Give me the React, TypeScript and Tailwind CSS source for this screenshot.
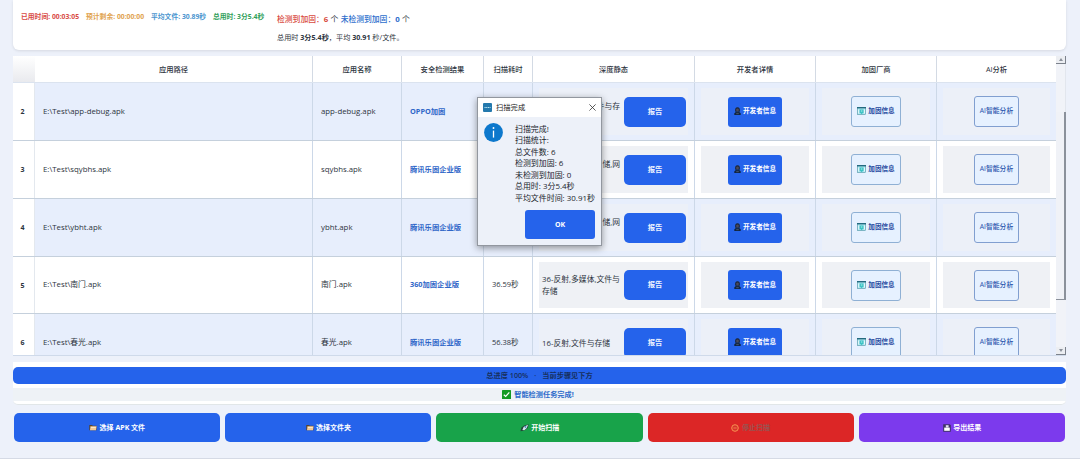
import type { ReactNode } from 'react'

interface ScanRow {
    id: number
    path: string
    name: string
    result: string
    time?: string
    detail: string[]
    height: string
}

const rows: ScanRow[] = [
    { id: 2, path: 'E:\\Test\\app-debug.apk', name: 'app-debug.apk', result: 'OPPO加固', detail: ['件与存', '\u00a0'], height: 'h-[58px]' },
    { id: 3, path: 'E:\\Test\\sqybhs.apk', name: 'sqybhs.apk', result: '腾讯乐固企业版', detail: ['储,网', '\u00a0'], height: 'h-[58px]' },
    { id: 4, path: 'E:\\Test\\ybht.apk', name: 'ybht.apk', result: '腾讯乐固企业版', detail: ['储,网', '\u00a0'], height: 'h-[58px]' },
    { id: 5, path: 'E:\\Test\\南门.apk', name: '南门.apk', result: '360加固企业版', time: '36.59秒', detail: ['36-反射,多媒体,文件与', '存储'], height: 'h-[57px]' },
    { id: 6, path: 'E:\\Test\\春光.apk', name: '春光.apk', result: '腾讯乐固企业版', time: '56.38秒', detail: ['16-反射,文件与存储'], height: 'h-[58px]' },
]

const columns = ['应用路径', '应用名称', '安全检测结果', '扫描耗时', '深度静态', '开发者详情', '加固厂商', 'AI分析']

const GRID = 'grid grid-cols-[22px_278px_89px_82px_49px_162px_121px_121px_120px]'

const summary = [
    '扫描完成!',
    '扫描统计:',
    '总文件数: 6',
    '检测到加固: 6',
    '未检测到加固: 0',
    '总用时: 3分5.4秒',
    '平均文件时间: 30.91秒',
]

function PersonIcon() {
    return (
        <svg width="7" height="8" viewBox="0 0 7 8" className="shrink-0 mb-px">
            <path d="M0.3 8V6.2L1.8 5h3.4l1.5 1.2V8z" fill="#10243f" />
            <path d="M1.2 4.8C0.8 1.6 1.6 0.3 3.5 0.3s2.7 1.3 2.3 4.5z" fill="#1b2436" />
            <circle cx="3.5" cy="3" r="1.4" fill="#4a4a5c" />
            <path d="M2.2 5.8h2.6v1.4H2.2z" fill="#3d4c68" />
        </svg>
    )
}

function VendorIcon() {
    return (
        <svg width="9" height="8" viewBox="0 0 9 8" className="shrink-0 mb-px">
            <rect x="0.3" y="0.3" width="8.4" height="7.4" fill="#a8e4ee" stroke="#3f8195" strokeWidth="0.5" />
            <rect width="9" height="1.4" fill="#236a80" />
            <path d="M1.2 2.6h1v4h-1zM6.9 2.6h1v4h-1z" fill="#e9fafc" />
            <path d="M2.6 2.5h3.9v2.8L4.6 7.3 2.6 5.3z" fill="#3cc2c4" />
            <path d="M3.9 3.5h1.4v1H3.9z" fill="#b6f0f0" />
        </svg>
    )
}

function FolderIcon() {
    return (
        <svg width="8" height="7" viewBox="0 0 8 7" className="shrink-0">
            <path d="M0.3 6.3V1h2.8l.7.8h3.7v4.5z" fill="#58432c" />
            <path d="M1.4 2.2h6.2l-.6 4H1z" fill="#f2c996" />
            <path d="M2 2.9h4.9l-.2.9H1.8z" fill="#fff0d8" />
        </svg>
    )
}

function RocketIcon() {
    return (
        <svg width="9" height="8" viewBox="0 0 9 8" className="shrink-0">
            <path d="M0.4 7.2 1.4 3.4l2.8-1.8L8.6.2 7.9 4 4.3 6.6z" fill="#234538" />
            <path d="M2.4 6 3.6 2.9 8 .8 6.8 4.1 4.3 6.2z" fill="#d8e7ee" />
            <circle cx="5.5" cy="3" r=".9" fill="#4d8fc0" />
        </svg>
    )
}

function StopIcon() {
    return (
        <svg width="8" height="8" viewBox="0 0 8 8" className="shrink-0">
            <circle cx="4" cy="4" r="3.3" fill="#d8322c" stroke="#f79452" strokeWidth="1" />
            <path d="M2.4 4h3.2" stroke="#f79452" strokeWidth=".8" />
        </svg>
    )
}

function SaveIcon() {
    return (
        <svg width="8" height="8" viewBox="0 0 8 8" className="shrink-0">
            <path d="M0.2.3h6.6l1 1v6.4H.2z" fill="#3f3463" />
            <path d="M1.2 3.6h5.6v3.2H1.2z" fill="#fff" />
            <path d="M2.8 1.2h2.8v2.4H2.8z" fill="#e4e0f2" />
        </svg>
    )
}

function Panel({ striped, children, className = '' }: { striped: boolean; children: ReactNode; className?: string }) {
    return (
        <div className="border-r border-[#ccd8e8] px-[6px] pt-[5px] pb-[5px]">
            <div className={`h-full flex items-center ${striped ? 'bg-[#ecf0f8]' : 'bg-[#eff1f5]'} ${className}`}>{children}</div>
        </div>
    )
}

function TableRow({ row }: { row: ScanRow }) {
    const striped = row.id % 2 === 0
    return (
        <div className={`${GRID} ${row.height} shrink-0 border-b border-[#c5d0dc] ${striped ? 'bg-[#e7eefc]' : 'bg-white'}`}>
            <div className="flex items-center justify-center bg-white border-r border-[#e3e8ee] font-bold text-[7px] pr-[2px]">{row.id}</div>
            <div className="flex items-center border-r border-[#ccd8e8] pl-[8px]">{row.path}</div>
            <div className="flex items-center border-r border-[#ccd8e8] pl-[8px]">{row.name}</div>
            <div className="flex items-center border-r border-[#ccd8e8] pl-[8px] font-bold text-[7.3px] text-[#2f66c8]">{row.result}</div>
            <div className="flex items-center border-r border-[#ccd8e8] pl-[8px] text-[7.5px]">{row.time}</div>
            <Panel striped={striped} className="justify-between pl-[3px] pr-[2px]">
                <div className={`w-[78px] text-[7.8px] leading-[12px] ${row.time ? '' : 'text-right'}`}>
                    {row.detail.map((line) => (
                        <div key={line}>{line}</div>
                    ))}
                </div>
                <button className="w-[62px] h-[30px] shrink-0 rounded-[5px] bg-[#2563eb] text-[#eef3ff] font-bold text-[7.3px]">报告</button>
            </Panel>
            <Panel striped={striped} className="justify-center">
                <button className="w-[54px] h-[30px] rounded-[3px] bg-[#2563eb] text-white font-bold text-[6.6px] flex items-center justify-center gap-[2px]">
                    <PersonIcon />
                    开发者信息
                </button>
            </Panel>
            <Panel striped={striped} className="justify-center">
                <button className="w-[50px] h-[31px] rounded-[3px] border border-[#8fb0d4] bg-[#e6f1ff] text-[#24479e] font-bold text-[6.6px] flex items-center justify-center gap-[2px]">
                    <VendorIcon />
                    加固信息
                </button>
            </Panel>
            <Panel striped={striped} className="justify-center">
                <button className="w-[45px] h-[31px] rounded-[3px] border border-[#819fd0] bg-[#e6f1ff] text-[#2853ac] font-medium text-[6.8px]">
                    AI智能分析
                </button>
            </Panel>
        </div>
    )
}

function Scrollbar() {
    return (
        <div className="w-[10px] flex flex-col bg-[#f1f3f8]">
            <div className="h-[8px] border-r border-b border-[#7c828c] bg-[#eceef2] flex items-center justify-center">
                <svg width="4" height="3" viewBox="0 0 4 3"><path d="M0 3 2 0l2 3z" fill="#8a909a" /></svg>
            </div>
            <div className="h-[48px] border-r border-[#e2e6ed]" />
            <div className="h-[188px] border-r-2 border-b border-[#8b919b] bg-[#f0f2f7]" />
            <div className="flex-1" />
            <div className="h-[8px] border-r border-b border-[#7c828c] bg-[#eceef2] flex items-center justify-center">
                <svg width="4" height="3" viewBox="0 0 4 3"><path d="M0 0 2 3l2-3z" fill="#8a909a" /></svg>
            </div>
        </div>
    )
}

function ResultDialog() {
    return (
        <div className="absolute left-[477px] top-[97px] w-[125px] h-[149px] border border-[#92979f] bg-[#edf1f9] shadow-[0_2px_7px_rgba(0,0,0,0.4)] flex flex-col">
            <div className="h-[19px] shrink-0 bg-white flex items-center px-[5px]">
                <svg width="9" height="9" viewBox="0 0 9 9">
                    <rect width="9" height="9" rx="1" fill="#2479ad" />
                    <path d="M1.5 4.5h6" stroke="#b9e6f5" strokeWidth="1" strokeDasharray="1.2 .5" />
                </svg>
                <span className="ml-[4px] text-[7.3px] text-[#1a1a1a]">扫描完成</span>
                <svg width="7" height="7" viewBox="0 0 7 7" className="ml-auto">
                    <path d="M.4.4l6.2 6.2M6.6.4.4 6.6" stroke="#333" strokeWidth=".8" />
                </svg>
            </div>
            <div className="flex pl-[6px] pt-[6px]">
                <svg width="19" height="19" viewBox="0 0 19 19">
                    <circle cx="9.5" cy="9.5" r="9.4" fill="#0d78cc" />
                    <path d="M9.5 7.6v7" stroke="#fff" strokeWidth="1.3" />
                    <circle cx="9.5" cy="5" r=".95" fill="#fff" />
                </svg>
                <div className="ml-[12px] pt-[0.5px] text-[7.95px] leading-[11.5px] whitespace-nowrap text-[#20242c]">
                    {summary.map((line) => (
                        <div key={line}>{line}</div>
                    ))}
                </div>
            </div>
            <button className="mt-auto mb-[6px] mr-[6px] self-end w-[70px] h-[29px] rounded-[3px] bg-[#2563eb] text-white font-bold text-[7px]">OK</button>
        </div>
    )
}

function ActionButton({ color, icon, children }: { color: string; icon: ReactNode; children: ReactNode }) {
    return (
        <button className={`flex-1 h-[29px] rounded-[5px] font-bold text-[7px] flex items-center justify-center gap-[2.5px] ${color}`}>
            {icon}
            {children}
        </button>
    )
}

export default function App() {
    return (
        <div className="relative w-[1080px] h-[459px] overflow-hidden flex flex-col pl-[13px] pr-[14px] bg-[#edf1fa] border-b border-[#d5dae5] text-[#2d3440] text-[7.8px] leading-none whitespace-nowrap font-['Open_Sans','Noto_Sans_CJK_SC',sans-serif]">
            <div className="h-[50px] shrink-0 flex rounded-b-[6px] bg-white shadow-[0_1px_3px_rgba(0,0,0,0.1)] pl-[8px]">
                <div className="w-[256px] pt-[14px] flex font-bold text-[6.8px]">
                    <span className="w-[65px] text-[#d84a45]">已用时间: 00:03:05</span>
                    <span className="w-[65px] text-[#dfa24e]">预计剩余: 00:00:00</span>
                    <span className="w-[62px] text-[#4a95cf]">平均文件: 30.89秒</span>
                    <span className="text-[#31a05a]">总用时: 3分5.4秒</span>
                </div>
                <div className="pt-[16px] text-[7.8px]">
                    <div className="flex gap-[2.3px]">
                        <span className="font-medium text-[#d84a40]">检测到加固：<b>6</b></span>
                        <span>个</span>
                        <span className="font-medium text-[#2b6dcc]">未检测到加固：<b>0</b></span>
                        <span>个</span>
                    </div>
                    <div className="mt-[10px] text-[7.15px]">
                        总用时 <b>3分5.4秒</b>，平均 <b>30.91</b> 秒/文件。
                    </div>
                </div>
            </div>

            <div className="mt-[6px] h-[300px] shrink-0 flex border-b border-[#cfdaea]">
                <div className="w-[1044px] overflow-hidden flex flex-col">
                    <div className={`${GRID} h-[27px] shrink-0 bg-white border-b border-[#dbe3ef] text-[7.3px] font-medium`}>
                        <div className="bg-gradient-to-b from-white to-[#e9eaee]" />
                        {columns.map((col) => (
                            <div key={col} className="flex items-center justify-center border-r border-[#d3dae4] pt-[1px]">{col}</div>
                        ))}
                    </div>
                    {rows.map((row) => (
                        <TableRow key={row.id} row={row} />
                    ))}
                </div>
                <Scrollbar />
            </div>

            <div className="mt-[6px] h-[43px] shrink-0 flex flex-col rounded-b-[5px] bg-white border-b border-[#e1e6e8]">
                <div className="mt-[5px] h-[17px] rounded-[5px] bg-[#2563eb] flex items-center justify-center gap-[6px] font-semibold text-[7.2px] text-[#17305f]">
                    <span>总进度 100%</span>
                    <span>·</span>
                    <span>当前步骤见下方</span>
                </div>
                <div className="mt-[4px] h-[13px] bg-[#eef2f6] flex items-center justify-center gap-[3px] pr-[3px] font-bold text-[7.2px] text-[#2d6bcb]">
                    <svg width="9" height="9" viewBox="0 0 9 9">
                        <rect width="9" height="9" rx=".6" fill="#159b25" />
                        <path d="M1.8 4.7 3.7 6.5 7.3 2.4" fill="none" stroke="#fff" strokeWidth="1.2" />
                    </svg>
                    智能检测任务完成!
                </div>
            </div>

            <div className="mt-[8px] mx-[1px] flex gap-[5px]">
                <ActionButton color="bg-[#2563eb] text-white" icon={<FolderIcon />}>选择 APK 文件</ActionButton>
                <ActionButton color="bg-[#2563eb] text-white" icon={<FolderIcon />}>选择文件夹</ActionButton>
                <ActionButton color="bg-[#18a34a] text-white" icon={<RocketIcon />}>开始扫描</ActionButton>
                <ActionButton color="bg-[#dc2626] text-[#9a5350]" icon={<StopIcon />}>停止扫描</ActionButton>
                <ActionButton color="bg-[#7c3aed] text-white" icon={<SaveIcon />}>导出结果</ActionButton>
            </div>

            <ResultDialog />
        </div>
    )
}
